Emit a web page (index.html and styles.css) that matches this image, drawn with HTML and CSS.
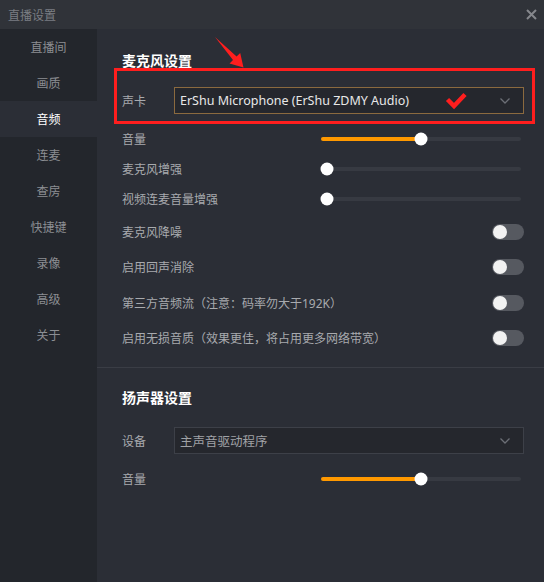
FILE: index.html
```html
<!DOCTYPE html>
<html lang="zh-CN">

<head>
    <meta charset="UTF-8">
    <title>直播设置</title>
    <link rel="stylesheet" href="styles.css">
</head>

<body>
    <div class="window">
        <div class="titlebar">
            <span>直播设置</span>
            <svg class="close" width="11" height="11" viewBox="0 0 11 11">
                <path d="M1 1L10 10M10 1L1 10" stroke="#85878c" stroke-width="2" fill="none"/>
            </svg>
        </div>

        <div class="layout">
            <nav class="sidebar">
                <div class="nav-item">直播间</div>
                <div class="nav-item">画质</div>
                <div class="nav-item active">音频</div>
                <div class="nav-item">连麦</div>
                <div class="nav-item">查房</div>
                <div class="nav-item">快捷键</div>
                <div class="nav-item">录像</div>
                <div class="nav-item">高级</div>
                <div class="nav-item">关于</div>
            </nav>

            <main class="content">
                <section class="group">
                    <h2>麦克风设置</h2>
                    <div class="row row-select marked">
                        <span class="label">声卡</span>
                        <div class="select focused">
                            <span>ErShu Microphone (ErShu ZDMY Audio)</span>
                            <svg class="check" width="22" height="18" viewBox="0 0 22 18">
                                <path d="M2.5 7.5L9 14L20 2.5" stroke="#ff1e1e" stroke-width="4.5" fill="none"/>
                            </svg>
                            <svg class="chevron" width="10" height="6" viewBox="0 0 10 6">
                                <path d="M0.5 0.5L5 5L9.5 0.5" stroke="#6c6f76" stroke-width="1.3" fill="none"/>
                            </svg>
                        </div>
                    </div>
                    <div class="row row-slider">
                        <span>音量</span>
                        <div class="slider" style="--v: 0.5">
                            <div class="slider-fill"></div>
                            <div class="slider-thumb"></div>
                        </div>
                    </div>
                    <div class="row row-slider">
                        <span>麦克风增强</span>
                        <div class="slider" style="--v: 0">
                            <div class="slider-fill"></div>
                            <div class="slider-thumb"></div>
                        </div>
                    </div>
                    <div class="row row-slider">
                        <span>视频连麦音量增强</span>
                        <div class="slider" style="--v: 0">
                            <div class="slider-fill"></div>
                            <div class="slider-thumb"></div>
                        </div>
                    </div>
                    <div class="row row-toggle">
                        <span>麦克风降噪</span>
                        <div class="toggle"><div class="knob"></div></div>
                    </div>
                    <div class="row row-toggle">
                        <span>启用回声消除</span>
                        <div class="toggle"><div class="knob"></div></div>
                    </div>
                    <div class="row row-toggle">
                        <span>第三方音频流（注意：码率勿大于192K）</span>
                        <div class="toggle"><div class="knob"></div></div>
                    </div>
                    <div class="row row-toggle">
                        <span>启用无损音质（效果更佳，将占用更多网络带宽）</span>
                        <div class="toggle"><div class="knob"></div></div>
                    </div>
                </section>

                <section class="group">
                    <h2>扬声器设置</h2>
                    <div class="row row-select">
                        <span class="label">设备</span>
                        <div class="select">
                            <span>主声音驱动程序</span>
                            <svg class="chevron" width="10" height="6" viewBox="0 0 10 6">
                                <path d="M0.5 0.5L5 5L9.5 0.5" stroke="#6c6f76" stroke-width="1.3" fill="none"/>
                            </svg>
                        </div>
                    </div>
                    <div class="row row-slider">
                        <span>音量</span>
                        <div class="slider" style="--v: 0.5">
                            <div class="slider-fill"></div>
                            <div class="slider-thumb"></div>
                        </div>
                    </div>
                </section>
            </main>
        </div>

        <!-- red arrow pointing at the sound card row -->
        <svg class="annotation-arrow" width="36" height="36" viewBox="212 34 36 36">
            <polygon points="215,37 236.6,56.5 240.2,53 243.5,67.5 229.5,63.5 233,60" fill="#ff1e1e"/>
        </svg>
    </div>
</body>
</html>
```

FILE: styles.css
```css
* {
    box-sizing: border-box;
}

body {
    margin: 0;
    background-color: #2b2e36;
    font-family: "Noto Sans", "Noto Sans CJK SC", sans-serif;
    font-size: 12px;
}

.window {
    position: relative;
    width: 544px;
    height: 582px;
    display: flex;
    flex-direction: column;
    background-color: #2b2e36;
}

.titlebar {
    height: 29px;
    display: flex;
    align-items: center;
    justify-content: space-between;
    padding: 0 7px 0 8px;
    background-color: #303339;
    color: #7b7e83;
}

.layout {
    flex: 1;
    display: flex;
}

.sidebar {
    width: 97px;
    background-color: #23262c;
}

.nav-item {
    height: 36px;
    display: flex;
    align-items: center;
    justify-content: center;
    color: #8c8e93;
}

.nav-item.active {
    background-color: #2b2e36;
    color: #fff;
}

.content {
    flex: 1;
}

.group {
    padding: 20px 20px 11px 25px;
    border-bottom: 1px solid #3a3d45;
}

.group + .group {
    padding-top: 18px;
    border-bottom: none;
}

h2 {
    margin: 0;
    font-size: 14px;
    line-height: 24px;
    font-weight: bold;
    color: #fff;
}

.row {
    display: flex;
    align-items: center;
    color: #a8aaae;
}

.row-select {
    position: relative;
    height: 27px;
    margin-top: 14px;
}

.group + .group .row-select {
    margin-top: 17px;
}

.row-select .label {
    width: 52px;
}

/* red annotation box round the sound card row */
.row-select.marked::after {
    content: "";
    position: absolute;
    left: -8px;
    right: -11px;
    top: -19px;
    bottom: -10px;
    border: 3px solid #ff1e1e;
}

.select {
    flex: 1;
    height: 27px;
    display: flex;
    align-items: center;
    padding: 0 13px 0 5px;
    border: 1px solid #3d4048;
    background-color: #25272d;
    color: #a0a2a6;
    font-size: 12.5px;
}

.select.focused {
    border-color: #8b6a3f;
    color: #e8e8e8;
}

.check {
    margin-left: 36px;
}

.chevron {
    margin-left: auto;
}

.row-slider {
    height: 30px;
    justify-content: space-between;
}

.row-select + .row-slider {
    margin-top: 10px;
}

.slider {
    position: relative;
    width: 200px;
    height: 4px;
    margin-right: 3px;
    border-radius: 2px;
    background-color: #373a42;
}

.slider-fill {
    width: calc(6px + (100% - 12px) * var(--v));
    height: 100%;
    border-radius: 2px;
    background-color: #ff9900;
}

.slider-thumb {
    position: absolute;
    top: 50%;
    left: calc(6px + (100% - 12px) * var(--v));
    width: 13px;
    height: 13px;
    border-radius: 50%;
    background-color: #fff;
    transform: translate(-50%, -50%);
}

.row-toggle {
    height: 35.5px;
    justify-content: space-between;
}

.toggle {
    width: 32px;
    height: 16px;
    padding: 1px;
    border-radius: 8px;
    background-color: #565960;
    display: flex;
    align-items: center;
}

.knob {
    width: 14px;
    height: 14px;
    border-radius: 50%;
    background-color: #f2f2f2;
}

.annotation-arrow {
    position: absolute;
    left: 212px;
    top: 34px;
}
```
